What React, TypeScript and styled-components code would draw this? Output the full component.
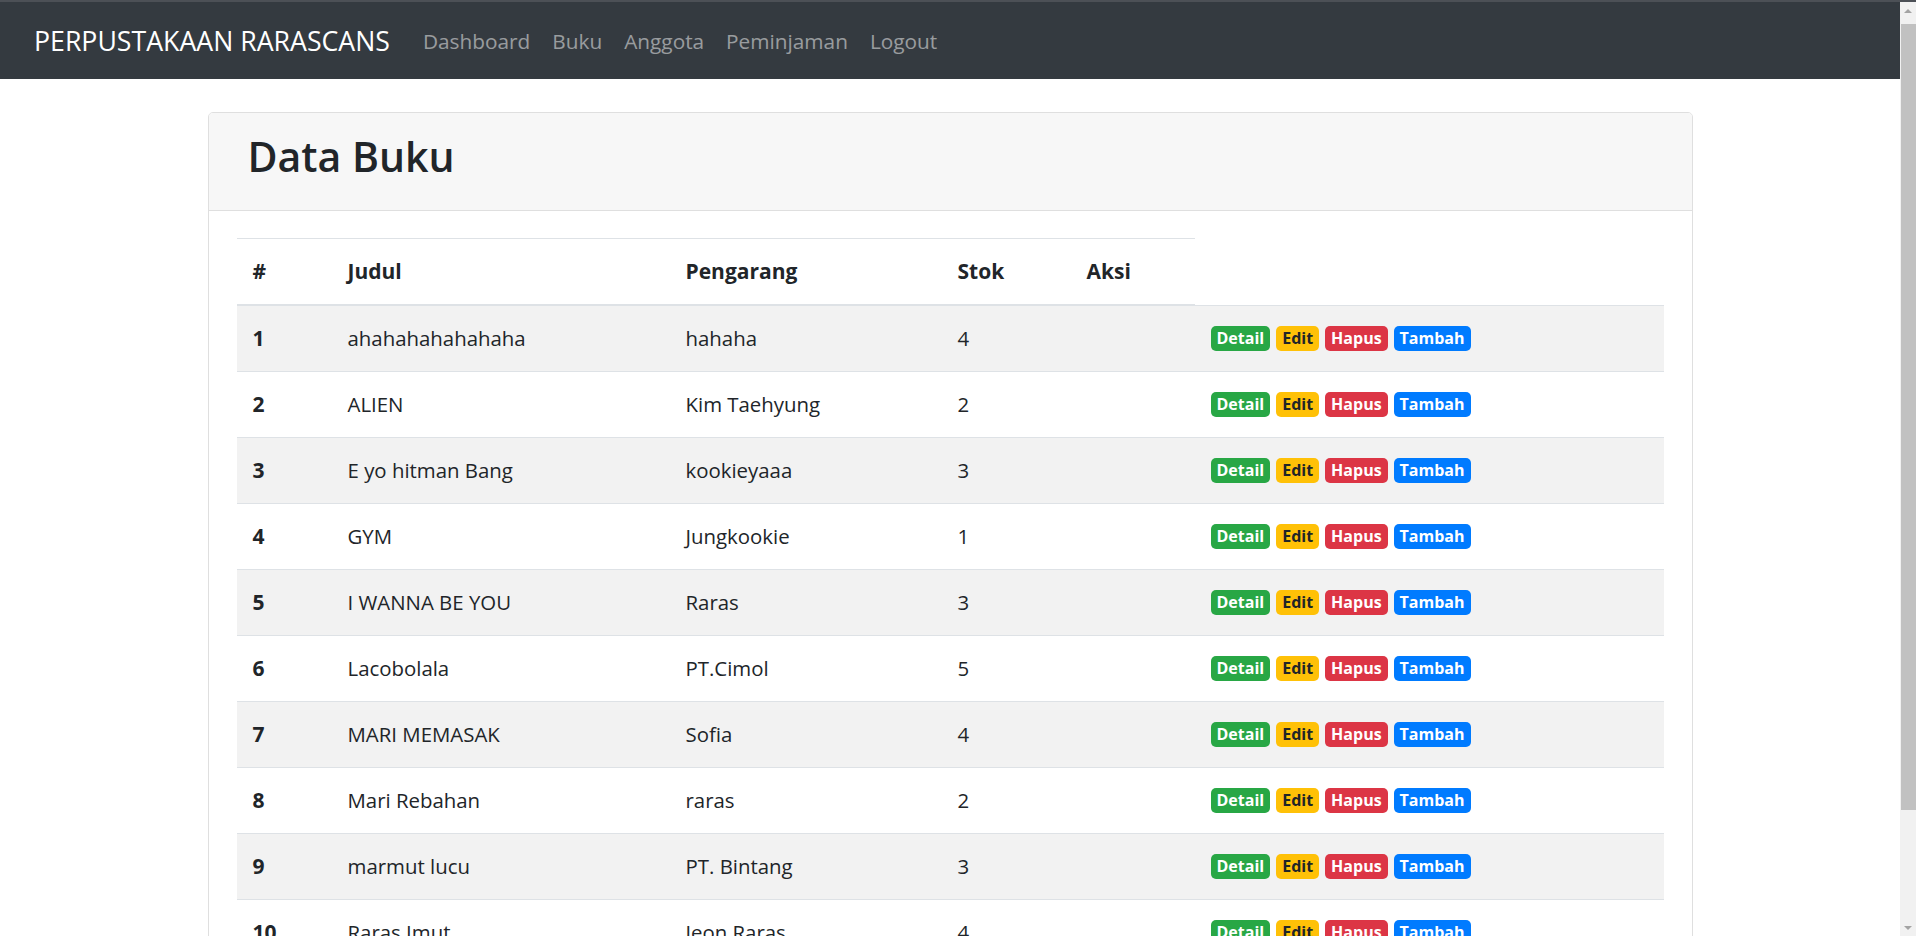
import React from "react";
import styled, { createGlobalStyle } from "styled-components";

const GlobalStyle = createGlobalStyle`
  html, body {
    margin: 0;
    padding: 0;
    background: #fff;
    font-family: "Segoe UI", "Open Sans", "Noto Sans", sans-serif;
    color: #212529;
    overflow: hidden;
  }
`;

// window frame: page on the left, the browser's scrollbar on the right
const Frame = styled.div`
  display: flex;
  height: 100vh;
  overflow: hidden;
`;

const Page = styled.div`
  flex: 1;
  min-width: 0;
  overflow: hidden;
`;

const ScrollBar = styled.div`
  width: 16px;
  display: flex;
  flex-direction: column;
  background: #f1f1f1;
  border-top: 2px solid #4c5056;
`;

const Arrow = styled.div<{ $down?: boolean }>`
  height: 17px;
  display: flex;
  align-items: center;
  justify-content: center;

  &::after {
    content: "";
    border-left: 4px solid transparent;
    border-right: 4px solid transparent;
    ${(p) =>
      p.$down
        ? "border-top: 4px solid #a3a3a3;"
        : "border-bottom: 4px solid #a3a3a3;"}
  }
`;

const Track = styled.div`
  flex: 1;
  padding: 5px 0 0 1px;
`;

const Thumb = styled.div`
  height: 786px;
  background: #c1c1c1;
`;

const Navbar = styled.nav`
  display: flex;
  align-items: center;
  height: 77px;
  padding: 0 34px;
  background: #343a40;
  border-top: 2px solid #4c5056;
`;

const Brand = styled.a`
  color: #fff;
  font-size: 26.7px;
  white-space: nowrap;
  margin-right: 33px;
`;

const NavLinks = styled.div`
  display: flex;
  gap: 22px;
`;

const NavLink = styled.a`
  color: rgba(255, 255, 255, 0.5);
  font-size: 20.8px;
`;

const Main = styled.main`
  width: 1485px;
  margin: 33px auto 80px;
`;

const Card = styled.section`
  border: 1px solid #dfdfdf;
  border-radius: 5px;
  overflow: hidden;
`;

const CardHeader = styled.header`
  background: #f7f7f7;
  border-bottom: 1px solid #dfdfdf;
  padding: 19px 39px 29px;
`;

const Title = styled.h1`
  margin: 0;
  font-size: 41px;
  font-weight: 600;
  line-height: 1.2;
`;

const CardBody = styled.div`
  padding: 27px 28px;
`;

const Table = styled.table`
  width: 100%;
  table-layout: fixed;
  border-collapse: collapse;
`;

const Th = styled.th<{ $w: number }>`
  box-sizing: border-box;
  width: ${(p) => p.$w}px;
  text-align: left;
  font-size: 21px;
  font-weight: 700;
  padding: 16px 16px 17px;
  line-height: 32px;
  border-top: 1px solid #dee2e6;
  border-bottom: 2px solid #dee2e6;
`;

const Row = styled.tr<{ $striped: boolean }>`
  background: ${(p) => (p.$striped ? "#f2f2f2" : "#fff")};
`;

const Td = styled.td<{ $bold?: boolean }>`
  padding: 16px;
  font-size: ${(p) => (p.$bold ? "21px" : "20.4px")};
  line-height: 33px;
  border-top: 1px solid #dee2e6;
  font-weight: ${(p) => (p.$bold ? 700 : 400)};
  white-space: nowrap;
`;

const Badges = styled.div`
  display: flex;
  gap: 6px;
  align-items: center;
`;

const Badge = styled.a<{ $bg: string; $fg?: string }>`
  display: inline-block;
  padding: 2px 6px;
  font-size: 16px;
  font-weight: 700;
  line-height: 21px;
  border-radius: 5px;
  background: ${(p) => p.$bg};
  color: ${(p) => p.$fg || "#fff"};
`;

const books = [
  ["ahahahahahahaha", "hahaha", 4],
  ["ALIEN", "Kim Taehyung", 2],
  ["E yo hitman Bang", "kookieyaaa", 3],
  ["GYM", "Jungkookie", 1],
  ["I WANNA BE YOU", "Raras", 3],
  ["Lacobolala", "PT.Cimol", 5],
  ["MARI MEMASAK", "Sofia", 4],
  ["Mari Rebahan", "raras", 2],
  ["marmut lucu", "PT. Bintang", 3],
  ["Raras Imut", "Jeon Raras", 4],
] as const;

const App = () => {
  return (
    <Frame>
      <GlobalStyle />
      <Page>
        <Navbar>
          <Brand>PERPUSTAKAAN RARASCANS</Brand>
          <NavLinks>
            <NavLink>Dashboard</NavLink>
            <NavLink>Buku</NavLink>
            <NavLink>Anggota</NavLink>
            <NavLink>Peminjaman</NavLink>
            <NavLink>Logout</NavLink>
          </NavLinks>
        </Navbar>
        <Main>
          <Card>
            <CardHeader>
              <Title>Data Buku</Title>
            </CardHeader>
            <CardBody>
              <Table>
                <thead>
                  <tr>
                    <Th $w={95}>#</Th>
                    <Th $w={338}>Judul</Th>
                    <Th $w={272}>Pengarang</Th>
                    <Th $w={129}>Stok</Th>
                    <Th $w={124}>Aksi</Th>
                  </tr>
                </thead>
                <tbody>
                  {books.map(([judul, pengarang, stok], i) => (
                    <Row key={judul} $striped={i % 2 === 0}>
                      <Td $bold>{i + 1}</Td>
                      <Td>{judul}</Td>
                      <Td>{pengarang}</Td>
                      <Td>{stok}</Td>
                      <Td />
                      <Td>
                        <Badges>
                          <Badge $bg="#28a745">Detail</Badge>
                          <Badge $bg="#ffc107" $fg="#212529">Edit</Badge>
                          <Badge $bg="#dc3545">Hapus</Badge>
                          <Badge $bg="#007bff">Tambah</Badge>
                        </Badges>
                      </Td>
                    </Row>
                  ))}
                </tbody>
              </Table>
            </CardBody>
          </Card>
        </Main>
      </Page>
      <ScrollBar>
        <Arrow />
        <Track>
          <Thumb />
        </Track>
        <Arrow $down />
      </ScrollBar>
    </Frame>
  );
};

export default App;
